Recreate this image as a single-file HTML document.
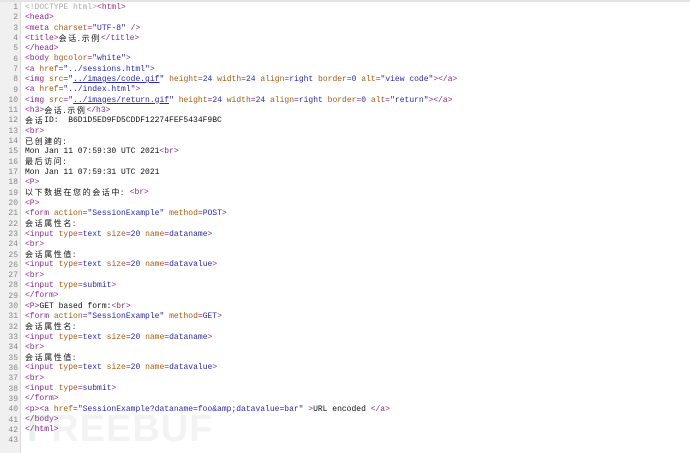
<!DOCTYPE html>
<html><head><meta charset="utf-8"><style>
html,body{margin:0;padding:0;background:#fff;width:690px;height:453px;overflow:hidden;position:relative}
.top{position:absolute;left:0;top:0;width:690px;height:2px;background:#e4e4e4}
.gut{position:absolute;left:0;top:2px;width:20px;height:451px;background:#f0f0f0;border-right:1px solid #dcdcdc}
.wm{position:absolute;left:27px;top:408px;font:bold 38px "Liberation Sans",sans-serif;color:#f3f3f3;letter-spacing:1px}
.wm b{color:#e8f2ea}
.ln{position:absolute;left:0;width:18px;text-align:right;font:8px "Liberation Mono",monospace;color:#888;line-height:10.31px}
.code{position:absolute;left:25px;top:3px;font:8px "Liberation Mono",monospace;line-height:10.31px;color:#111}
.code div{height:10.31px;overflow:visible;white-space:pre}
.c{color:#aaa}.t{color:#8b2a8b}.a{color:#a85a10}.v{color:#2a2ab0}.u{color:#2a2ab0;text-decoration:underline}
.z{font-family:"Noto Sans CJK SC",sans-serif;letter-spacing:1.6px;line-height:0;position:relative;top:1px}
</style></head><body>
<div class="top"></div><div class="gut"></div>
<div class="wm"><b>F</b>REEBUF</div>
<div class="ln" style="top:3px">1<br>2<br>3<br>4<br>5<br>6<br>7<br>8<br>9<br>10<br>11<br>12<br>13<br>14<br>15<br>16<br>17<br>18<br>19<br>20<br>21<br>22<br>23<br>24<br>25<br>26<br>27<br>28<br>29<br>30<br>31<br>32<br>33<br>34<br>35<br>36<br>37<br>38<br>39<br>40<br>41<br>42<br>43</div>
<div class="code"><div><span class="c">&lt;!DOCTYPE html&gt;</span><span class="t">&lt;html&gt;</span></div>
<div><span class="t">&lt;head&gt;</span></div>
<div><span class="t">&lt;meta <span class="a">charset</span>=<span class="v">"UTF-8"</span> /&gt;</span></div>
<div><span class="t">&lt;title&gt;</span><span class="z">会话.示例</span><span class="t">&lt;/title&gt;</span></div>
<div><span class="t">&lt;/head&gt;</span></div>
<div><span class="t">&lt;body <span class="a">bgcolor</span>=<span class="v">"white"</span>&gt;</span></div>
<div><span class="t">&lt;a <span class="a">href</span>=<span class="v">"../sessions.html"</span>&gt;</span></div>
<div><span class="t">&lt;img <span class="a">src</span>=<span class="v">"<span class="u">../images/code.gif</span>"</span> <span class="a">height</span>=<span class="v">24</span> <span class="a">width</span>=<span class="v">24</span> <span class="a">align</span>=<span class="v">right</span> <span class="a">border</span>=<span class="v">0</span> <span class="a">alt</span>=<span class="v">"view code"</span>&gt;&lt;/a&gt;</span></div>
<div><span class="t">&lt;a <span class="a">href</span>=<span class="v">"../index.html"</span>&gt;</span></div>
<div><span class="t">&lt;img <span class="a">src</span>=<span class="v">"<span class="u">../images/return.gif</span>"</span> <span class="a">height</span>=<span class="v">24</span> <span class="a">width</span>=<span class="v">24</span> <span class="a">align</span>=<span class="v">right</span> <span class="a">border</span>=<span class="v">0</span> <span class="a">alt</span>=<span class="v">"return"</span>&gt;&lt;/a&gt;</span></div>
<div><span class="t">&lt;h3&gt;</span><span class="z">会话.示例</span><span class="t">&lt;/h3&gt;</span></div>
<div><span class="z">会话</span>ID:  B6D1D5ED9FD5CDDF12274FEF5434F9BC</div>
<div><span class="t">&lt;br&gt;</span></div>
<div><span class="z">已创建的:</span></div>
<div>Mon Jan 11 07:59:30 UTC 2021<span class="t">&lt;br&gt;</span></div>
<div><span class="z">最后访问:</span></div>
<div>Mon Jan 11 07:59:31 UTC 2021</div>
<div><span class="t">&lt;P&gt;</span></div>
<div><span class="z">以下数据在您的会话中:</span> <span class="t">&lt;br&gt;</span></div>
<div><span class="t">&lt;P&gt;</span></div>
<div><span class="t">&lt;form <span class="a">action</span>=<span class="v">"SessionExample"</span> <span class="a">method</span>=<span class="v">POST</span>&gt;</span></div>
<div><span class="z">会话属性名:</span></div>
<div><span class="t">&lt;input <span class="a">type</span>=<span class="v">text</span> <span class="a">size</span>=<span class="v">20</span> <span class="a">name</span>=<span class="v">dataname</span>&gt;</span></div>
<div><span class="t">&lt;br&gt;</span></div>
<div><span class="z">会话属性值:</span></div>
<div><span class="t">&lt;input <span class="a">type</span>=<span class="v">text</span> <span class="a">size</span>=<span class="v">20</span> <span class="a">name</span>=<span class="v">datavalue</span>&gt;</span></div>
<div><span class="t">&lt;br&gt;</span></div>
<div><span class="t">&lt;input <span class="a">type</span>=<span class="v">submit</span>&gt;</span></div>
<div><span class="t">&lt;/form&gt;</span></div>
<div><span class="t">&lt;P&gt;</span>GET based form:<span class="t">&lt;br&gt;</span></div>
<div><span class="t">&lt;form <span class="a">action</span>=<span class="v">"SessionExample"</span> <span class="a">method</span>=<span class="v">GET</span>&gt;</span></div>
<div><span class="z">会话属性名:</span></div>
<div><span class="t">&lt;input <span class="a">type</span>=<span class="v">text</span> <span class="a">size</span>=<span class="v">20</span> <span class="a">name</span>=<span class="v">dataname</span>&gt;</span></div>
<div><span class="t">&lt;br&gt;</span></div>
<div><span class="z">会话属性值:</span></div>
<div><span class="t">&lt;input <span class="a">type</span>=<span class="v">text</span> <span class="a">size</span>=<span class="v">20</span> <span class="a">name</span>=<span class="v">datavalue</span>&gt;</span></div>
<div><span class="t">&lt;br&gt;</span></div>
<div><span class="t">&lt;input <span class="a">type</span>=<span class="v">submit</span>&gt;</span></div>
<div><span class="t">&lt;/form&gt;</span></div>
<div><span class="t">&lt;p&gt;&lt;a <span class="a">href</span>=<span class="v">"SessionExample?dataname=foo&amp;amp;datavalue=bar"</span> &gt;</span>URL encoded <span class="t">&lt;/a&gt;</span></div>
<div><span class="t">&lt;/body&gt;</span></div>
<div><span class="t">&lt;/html&gt;</span></div>
</div>
</body></html>
